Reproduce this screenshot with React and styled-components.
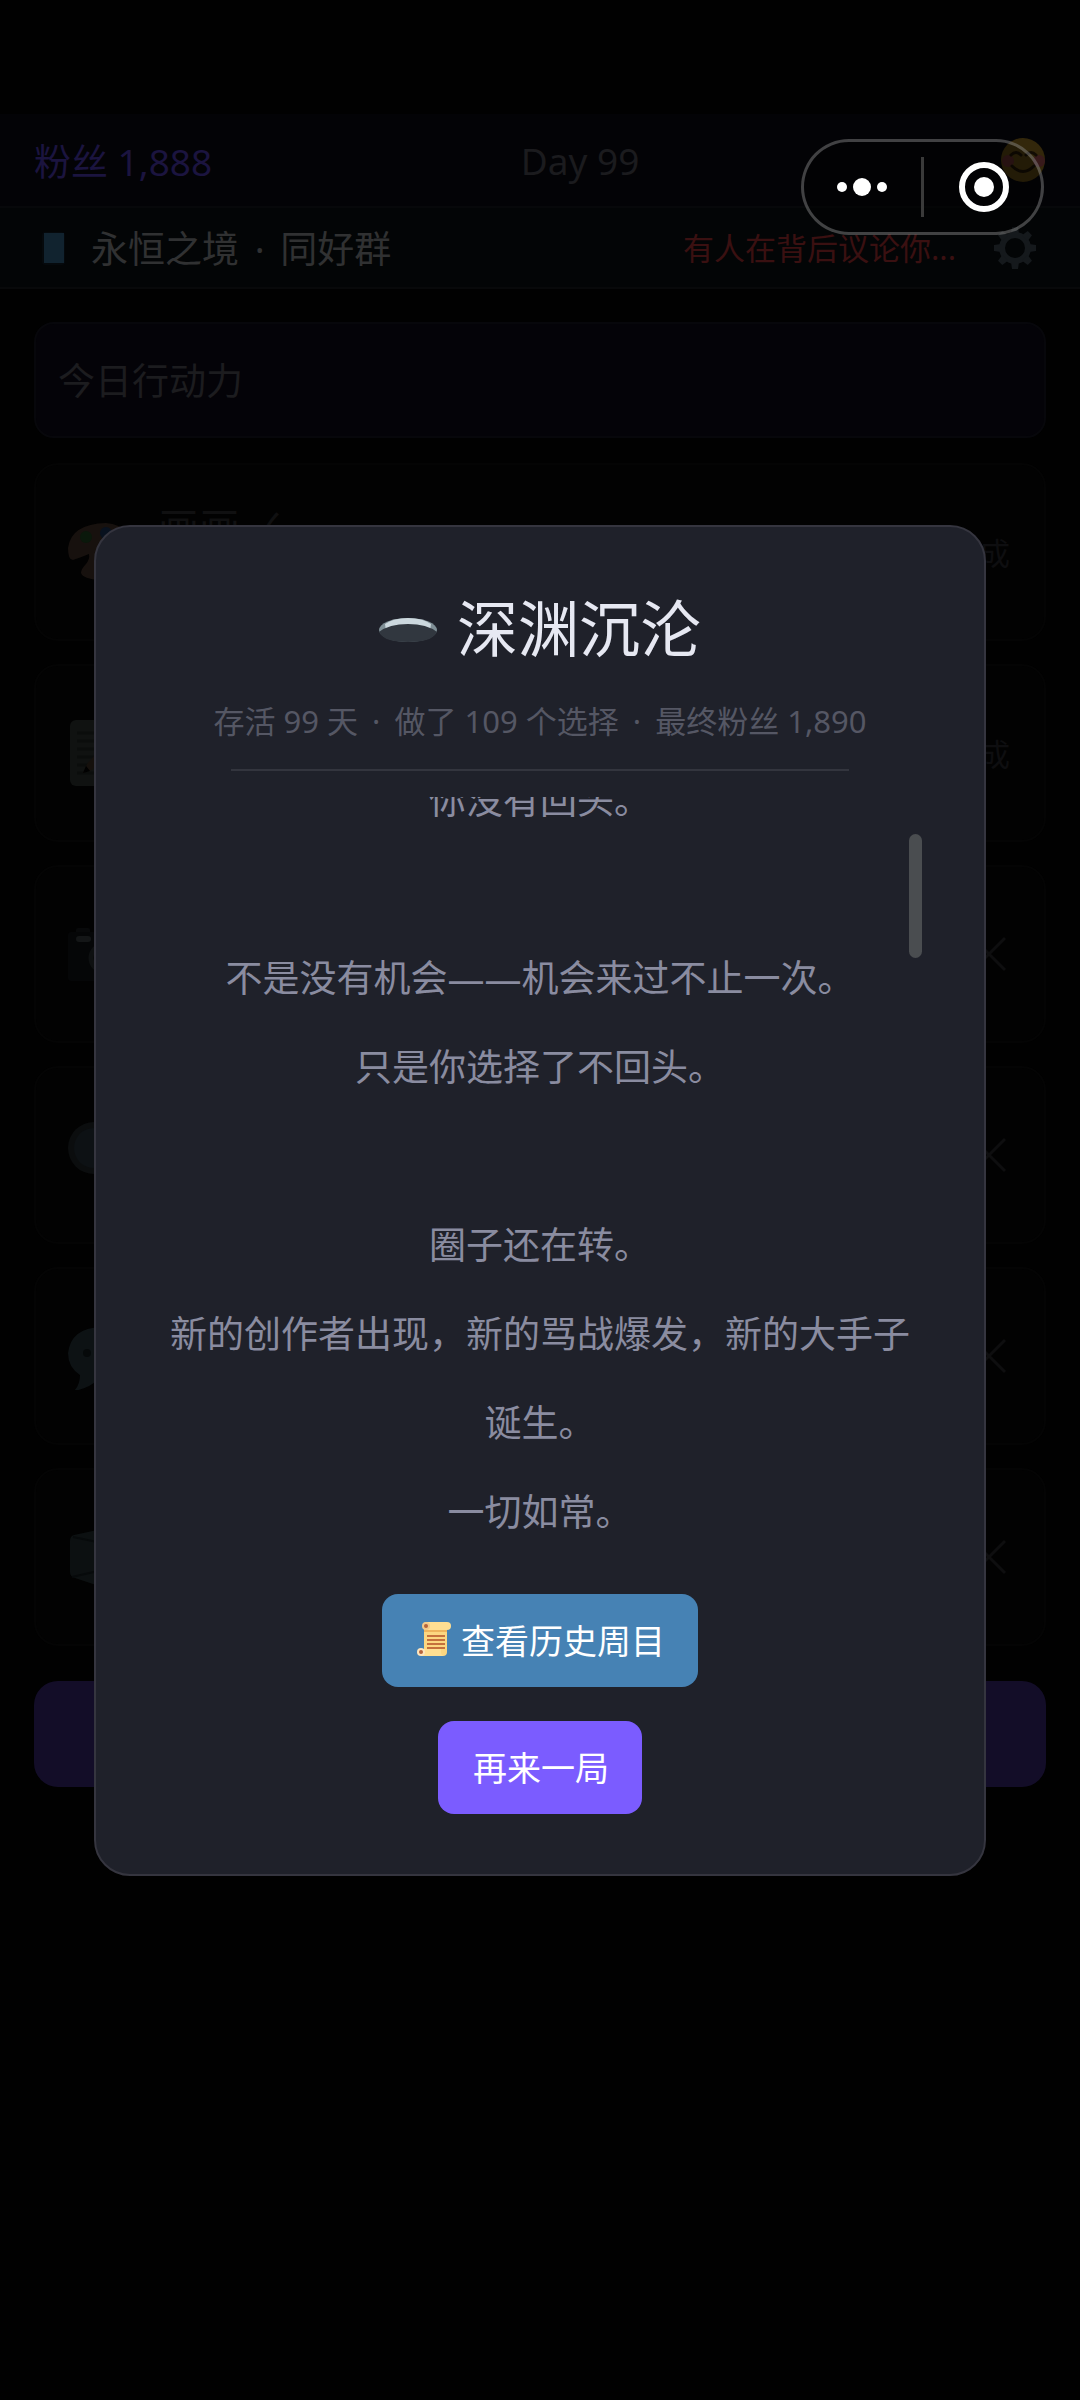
import styled, { createGlobalStyle } from 'styled-components';
import { useEffect, useRef } from 'react';

const GlobalStyle = createGlobalStyle`
  * {
    box-sizing: border-box;
  }
  body {
    margin: 0;
    background-color: #010101;
    font-family: 'Noto Sans', 'Noto Sans CJK SC', sans-serif;
  }
  button {
    font-family: inherit;
    border: none;
    padding: 0;
    cursor: pointer;
  }
`;

const Page = styled.div`
  min-height: 100vh;
  padding-top: 114px;
`;

const Header = styled.header`
  display: flex;
  align-items: center;
  justify-content: space-between;
  height: 94px;
  padding: 0 34px;
  background-color: #030306;
  border-bottom: 2px solid #07080a;
  font-size: 37px;
`;

const Fans = styled.span`
  color: #1b143f;
`;

const Day = styled.span`
  color: #1b1b1e;
`;

const Mood = styled.div`
  display: flex;
  justify-content: flex-end;
  width: 98px;
`;

const GroupBar = styled.div`
  display: flex;
  align-items: center;
  height: 81px;
  padding: 0 34px;
  background-color: #030506;
  border-bottom: 2px solid #08090a;
`;

const GroupName = styled.span`
  flex: 1;
  margin-left: 20px;
  padding-bottom: 2px;
  font-size: 37px;
  color: #303132;
`;

const Notice = styled.span`
  padding-bottom: 2px;
  font-size: 31px;
  color: #3a1011;
`;

const GearButton = styled.button`
  display: flex;
  margin-left: 28px;
  padding: 8px;
  background: none;
`;

const Main = styled.main`
  display: flex;
  flex-direction: column;
  padding: 33px 34px;
`;

const Power = styled.div`
  display: flex;
  align-items: center;
  height: 116px;
  padding: 0 22px 2px;
  background-color: #040308;
  border: 2px solid #07070b;
  border-radius: 20px;
  font-size: 37px;
  color: #1c1c1f;
`;

const ActionList = styled.div`
  display: flex;
  flex-direction: column;
  gap: 23px;
  margin: 25px 0 35px;
`;

const Action = styled.div`
  display: flex;
  align-items: center;
  gap: 22px;
  height: 178px;
  padding: 0 34px 0 32px;
  background-color: #020202;
  border: 2px solid #040404;
  border-radius: 24px;
`;

const ActionInfo = styled.div`
  flex: 1;
  height: 98px;
`;

const ActionName = styled.div`
  font-size: 41px;
  line-height: 48px;
  color: #101011;
`;

const ActionDone = styled.span`
  padding-bottom: 2px;
  font-size: 31px;
  color: #0e0e10;
`;

const EndDay = styled.button`
  height: 106px;
  background-color: #130d28;
  border-radius: 24px;
`;

const Overlay = styled.div`
  position: fixed;
  inset: 0;
  display: flex;
  align-items: center;
  justify-content: center;
`;

const Modal = styled.section`
  display: flex;
  flex-direction: column;
  align-items: center;
  width: calc(100% - 188px);
  padding: 58px 60px 60px;
  background-color: #1f212a;
  border: 2px solid #35353f;
  border-radius: 36px;
`;

const Title = styled.h1`
  display: flex;
  align-items: center;
  gap: 20px;
  margin: 0;
  font-size: 61px;
  font-weight: 400;
  line-height: 88px;
  color: #e6e8f2;
`;

const Summary = styled.p`
  margin: 26px 0;
  font-size: 31px;
  line-height: 44px;
  color: #555764;
`;

const Dot = styled.span`
  margin: 0 6px;
`;

const Divider = styled.hr`
  width: 618px;
  max-width: 100%;
  height: 2px;
  margin: 0 0 26px;
  border: none;
  background-color: #33353e;
`;

const StoryBox = styled.div`
  position: relative;
  align-self: stretch;
  margin-bottom: 35px;
`;

const Story = styled.div`
  height: 762px;
  padding: 0 12px 48px;
  overflow-y: auto;
  scrollbar-width: none;
`;

const Line = styled.p`
  min-height: 89px;
  margin: 0;
  font-size: 37px;
  line-height: 89px;
  text-align: center;
  color: #8a8ca0;
`;

const Thumb = styled.div`
  position: absolute;
  top: 37px;
  right: 2px;
  width: 13px;
  height: 124px;
  border-radius: 7px;
  background-color: #4a4d50;
`;

const Actions = styled.div`
  display: flex;
  flex-direction: column;
  align-items: center;
  gap: 34px;
`;

const Button = styled.button`
  display: flex;
  align-items: center;
  gap: 10px;
  height: 93px;
  padding: 0 33px 2px 35px;
  border-radius: 16px;
  font-size: 34px;
  color: white;
  background-color: ${(props) => (props.$primary ? '#7b5cff' : '#4682b4')};
`;

const Capsule = styled.div`
  position: fixed;
  top: 139px;
  right: 36px;
  display: flex;
  align-items: center;
  width: 243px;
  height: 96px;
  background-color: rgba(0, 0, 0, 0.3);
  border: 3px solid rgba(255, 255, 255, 0.25);
  border-radius: 48px;
`;

const CapsuleButton = styled.button`
  flex: 1;
  display: flex;
  align-items: center;
  justify-content: center;
  height: 60px;
  background: none;

  & + & {
    border-left: 3px solid #3a3a3a;
  }
`;

const PhoneIcon = () => (
  <svg width='37' height='37' viewBox='0 0 37 37'>
    <rect x='8' y='3' width='23' height='33' rx='3' fill='#05090c' />
    <rect x='10' y='4' width='20' height='30' fill='#11232f' />
  </svg>
);

const SmileIcon = () => (
  <svg width='45' height='45' viewBox='0 0 45 45'>
    <circle cx='22' cy='22' r='22' fill='#33270b' />
    <circle cx='7' cy='23' r='6' fill='#381a1b' />
    <circle cx='38' cy='23' r='6' fill='#381a1b' />
    <g fill='none' stroke='#120c04' strokeWidth='3' strokeLinecap='round'>
      <path d='M10 17q5-5 10 0M25 17q5-5 10 0' />
      <path d='M11 28q11 11 22 0' />
    </g>
  </svg>
);

const GearIcon = () => (
  <svg width='46' height='46' viewBox='-23 -23 46 46'>
    <circle r='13' fill='none' stroke='#15191c' strokeWidth='6' />
    {[0, 45, 90, 135, 180, 225, 270, 315].map((angle) => (
      <path
        key={angle}
        d='M-4-14L-3-21H3L4-14Z'
        fill='#15191c'
        transform={`rotate(${angle})`}
      />
    ))}
  </svg>
);

const ActionIcon = ({ children }) => (
  <svg width='68' height='68' viewBox='0 0 68 68'>
    {children}
  </svg>
);

const PaletteIcon = () => (
  <ActionIcon>
    <path
      d='M5 42Q0 42 0 30Q3 6 38 5Q66 8 67 33Q62 60 32 62Q15 61 13 55Q13 51 18 46Q22 41 21 36Q14 39 5 42Z'
      fill='#17110e'
    />
    <circle cx='18' cy='19' r='6' fill='#0a180b' />
    <circle cx='38' cy='15' r='6' fill='#08111e' />
    <circle cx='54' cy='25' r='6' fill='#1d0b0b' />
  </ActionIcon>
);

const MemoIcon = () => (
  <ActionIcon>
    <rect x='2' y='1' width='60' height='66' rx='6' fill='#101211' />
    <path
      d='M9 14h44M9 22h44M9 30h44M9 38h44M9 46h44M9 54h44'
      stroke='#0b0d0c'
      strokeWidth='3'
    />
    <path d='M15 54l4-9L52 8l9 6L24 51Z' fill='#15100c' />
    <path d='M15 54l3-7 4 5Z' fill='#010101' />
  </ActionIcon>
);

const CameraIcon = () => (
  <ActionIcon>
    <rect x='8' y='8' width='14' height='6' rx='2' fill='#08090a' />
    <rect x='0' y='12' width='66' height='49' rx='3' fill='#050607' />
    <rect x='8' y='16' width='15' height='6' rx='3' fill='#141617' />
    <circle cx='36' cy='38' r='13' fill='#050607' stroke='#0e1011' strokeWidth='5' />
  </ActionIcon>
);

const LensIcon = () => (
  <ActionIcon>
    <path d='M44 44L62 62' stroke='#0b0d0e' strokeWidth='8' strokeLinecap='round' />
    <circle cx='26' cy='27' r='26' fill='#0b0d0e' />
    <circle cx='26' cy='27' r='20' fill='#0d1114' />
  </ActionIcon>
);

const BubbleIcon = () => (
  <ActionIcon>
    <path
      d='M6 69Q12 63 12 53Q0 45 0 31Q3 6 33 5Q63 7 66 31Q63 55 30 57Q22 66 6 69Z'
      fill='#0d1214'
    />
    <circle cx='19' cy='31' r='4' fill='#06090a' />
    <circle cx='33' cy='31' r='4' fill='#06090a' />
    <circle cx='47' cy='31' r='4' fill='#06090a' />
  </ActionIcon>
);

const BoxIcon = () => (
  <ActionIcon>
    <path
      d='M6 12Q2 13 2 18V49Q2 54 7 55L34 64L61 55Q66 53 66 48V17Q66 13 60 11L34 6Z'
      fill='#0c1011'
    />
    <path d='M5 14L34 20L63 14M4 54L30 48' fill='none' stroke='#070a0b' strokeWidth='2' />
  </ActionIcon>
);

const CrossIcon = () => (
  <svg width='42' height='42' viewBox='0 0 42 42'>
    <path d='M5 5L37 37M37 5L5 37' stroke='#0e0e0f' strokeWidth='3' />
  </svg>
);

const HoleIcon = () => (
  <svg width='58' height='34' viewBox='0 0 58 34'>
    <ellipse cx='29' cy='18' rx='29' ry='12' fill='#7f8f96' />
    <path d='M6 12Q14 6 29 6Q44 6 52 12L51 19H7Z' fill='#ccd8de' />
    <path d='M0 20Q10 12 29 12Q48 12 58 20Q54 30 29 30Q4 30 0 20Z' fill='#31373f' />
  </svg>
);

const ScrollIcon = () => (
  <svg width='34' height='34' viewBox='0 0 34 34'>
    <path d='M7 1H30V30Q30 34 26 34H4L7 28Z' fill='#fcd680' />
    <path d='M7 8H30V10H7Z' fill='#efb45c' />
    <rect x='6' y='0' width='28' height='8' rx='4' fill='#ffdf92' />
    <circle cx='9' cy='4' r='4' fill='#f3c98a' />
    <circle cx='9' cy='4' r='2' fill='#b5643c' />
    <path d='M4 27H24V30Q24 34 28 34H4Z' fill='#ffdf92' />
    <circle cx='4' cy='30' r='4' fill='#fde5bd' />
    <circle cx='4' cy='30' r='2' fill='#b5643c' />
    <path d='M10 14H28M10 18H28M10 22H28M10 26H28' stroke='#c5703d' strokeWidth='2' />
  </svg>
);

const actions = [
  { id: 'draw', icon: PaletteIcon, name: '画画 ✓', done: true },
  { id: 'write', icon: MemoIcon, done: true },
  { id: 'photo', icon: CameraIcon },
  { id: 'browse', icon: LensIcon },
  { id: 'chat', icon: BubbleIcon },
  { id: 'goods', icon: BoxIcon },
];

const story = [
  '你没有回头。',
  '',
  '不是没有机会——机会来过不止一次。',
  '只是你选择了不回头。',
  '',
  '圈子还在转。',
  '新的创作者出现，新的骂战爆发，新的大手子诞生。',
  '一切如常。',
];

const App = () => {
  const storyRef = useRef(null);

  // the story has already been scrolled a little past its first line
  useEffect(() => {
    storyRef.current.scrollTop = 42;
  }, []);

  return (
    <>
      <GlobalStyle />
      <Page>
        <Header>
          <Fans>粉丝 1,888</Fans>
          <Day>Day 99</Day>
          <Mood>
            <SmileIcon />
          </Mood>
        </Header>
        <GroupBar>
          <PhoneIcon />
          <GroupName>
            永恒之境 <Dot>·</Dot> 同好群
          </GroupName>
          <Notice>有人在背后议论你...</Notice>
          <GearButton aria-label='设置'>
            <GearIcon />
          </GearButton>
        </GroupBar>
        <Main>
          <Power>今日行动力</Power>
          <ActionList>
            {actions.map(({ id, icon: Icon, name, done }) => (
              <Action key={id}>
                <Icon />
                <ActionInfo>
                  <ActionName>{name}</ActionName>
                </ActionInfo>
                {done ? <ActionDone>已完成</ActionDone> : <CrossIcon />}
              </Action>
            ))}
          </ActionList>
          <EndDay aria-label='结束今天' />
        </Main>
      </Page>
      <Overlay>
        <Modal role='dialog' aria-labelledby='ending-title'>
          <Title id='ending-title'>
            <HoleIcon />
            深渊沉沦
          </Title>
          <Summary>
            存活 99 天 <Dot>·</Dot> 做了 109 个选择 <Dot>·</Dot> 最终粉丝 1,890
          </Summary>
          <Divider />
          <StoryBox>
            <Story ref={storyRef}>
              {story.map((text, index) => (
                <Line key={index}>{text}</Line>
              ))}
            </Story>
            <Thumb />
          </StoryBox>
          <Actions>
            <Button>
              <ScrollIcon />
              查看历史周目
            </Button>
            <Button $primary>再来一局</Button>
          </Actions>
        </Modal>
      </Overlay>
      <Capsule>
        <CapsuleButton aria-label='更多'>
          <svg width='52' height='20' viewBox='0 0 52 20' fill='white'>
            <circle cx='5' cy='10' r='5' />
            <circle cx='25' cy='10' r='9' />
            <circle cx='45' cy='10' r='5' />
          </svg>
        </CapsuleButton>
        <CapsuleButton aria-label='关闭'>
          <svg width='52' height='52' viewBox='0 0 52 52'>
            <circle cx='27' cy='26' r='22' fill='none' stroke='white' strokeWidth='6' />
            <circle cx='27' cy='26' r='10' fill='white' />
          </svg>
        </CapsuleButton>
      </Capsule>
    </>
  );
};

export default App;
